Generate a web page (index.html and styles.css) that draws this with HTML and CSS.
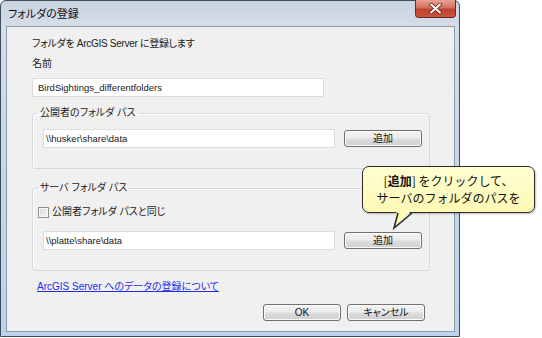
FILE: index.html
```html
<!DOCTYPE html>
<html lang="ja">
<head>
    <meta charset="UTF-8">
    <title>フォルダの登録</title>
    <link rel="stylesheet" href="styles.css">
</head>
<body>
    <div class="window">
        <div class="titlebar">
            <span class="title">フォルダの登録</span>
            <span class="close">
                <svg width="15" height="11" viewBox="0 0 15 11">
                    <path d="M3 1.5 L12 9.5 M12 1.5 L3 9.5" stroke="#5a1c16" stroke-width="3.6" stroke-linecap="round"/>
                    <path d="M3 1.5 L12 9.5 M12 1.5 L3 9.5" stroke="#ffffff" stroke-width="2" stroke-linecap="round"/>
                </svg>
            </span>
        </div>

        <div class="client">
            <p class="intro">フォルダを ArcGIS Server に登録します</p>
            <p class="field-label">名前</p>
            <div class="textbox name">BirdSightings_differentfolders</div>

            <fieldset class="group">
                <legend>公開者のフォルダ パス</legend>
                <div class="path-row">
                    <div class="textbox path">\\husker\share\data</div>
                    <button class="btn">追加</button>
                </div>
            </fieldset>

            <fieldset class="group second">
                <legend>サーバ フォルダ パス</legend>
                <label class="check-row">
                    <span class="checkbox"></span>
                    <span>公開者フォルダ パスと同じ</span>
                </label>
                <div class="path-row">
                    <div class="textbox path">\\platte\share\data</div>
                    <button class="btn">追加</button>
                </div>
            </fieldset>

            <a class="help-link" href="#">ArcGIS Server へのデータの登録について</a>

            <div class="actions">
                <button class="btn">OK</button>
                <button class="btn">キャンセル</button>
            </div>
        </div>
    </div>

    <!-- callout over the dialog -->
    <div class="callout">
        [<b>追加</b>] をクリックして、<br>サーバのフォルダのパスを
    </div>
    <svg class="callout-tail" width="26" height="22" viewBox="0 0 26 22">
        <polygon points="7,0 22,0 4,18" fill="#fdf9b8"/>
        <polyline points="8,3 4,18 22,3" fill="none" stroke="#2b2b2b" stroke-width="1.6" stroke-linejoin="miter"/>
    </svg>
</body>
</html>
```

FILE: styles.css
```css
body {
    margin: 0;
    background: #ffffff;
    font-family: "Liberation Sans", "Noto Sans CJK JP", sans-serif;
    font-size: 10px;
    font-feature-settings: "palt";
    color: #1a1a1a;
    width: 542px;
    height: 338px;
    overflow: hidden;
    position: relative;
}
.window {
    position: relative;
    width: 460px;
    height: 337px;
    box-sizing: border-box;
    border: 1px solid #3d4b5a;
    border-radius: 6px 6px 0 0;
    padding: 0 4px 4px 5px;
    background: linear-gradient(180deg, #c9d3de 0%, #d6dee8 8%, #c7d8ec 40%, #bcd3ee 100%);
    display: flex;
    flex-direction: column;
}
.titlebar {
    height: 25px;
    display: flex;
    align-items: center;
    padding-left: 2px;
    flex-shrink: 0;
}
.title {
    font-size: 11px;
    color: #111;
    margin-top: -1px;
}
.close {
    position: absolute;
    top: -1px;
    right: 3px;
    width: 41px;
    height: 18px;
    box-sizing: border-box;
    border: 1px solid #6b2a25;
    border-top: none;
    border-radius: 0 0 4px 4px;
    background: linear-gradient(180deg, #e8a394 0%, #d2705e 45%, #c0412e 55%, #c9553f 100%);
    display: flex;
    align-items: center;
    justify-content: center;
}
.client {
    flex: 1;
    background: #f0f0f0;
    border: 1px solid #8e9aa6;
    padding: 9px 0 0 25px;
    display: flex;
    flex-direction: column;
    align-items: flex-start;
}
.intro, .field-label {
    margin: 0;
    line-height: 16px;
}
.intro {
    letter-spacing: -0.3px;
}
.field-label {
    margin-top: 4px;
}
.textbox {
    box-sizing: border-box;
    height: 19px;
    background: #ffffff;
    border: 1px solid #dcdcdc;
    line-height: 17px;
    white-space: pre;
    font-size: 9.5px;
}
.name {
    width: 292px;
    margin-top: 6px;
    padding-left: 5px;
}
.group {
    width: 398px;
    box-sizing: border-box;
    margin: 8px 0 0 0;
    padding: 8px 0 20px 10px;
    border: 1px solid #d5d9dd;
    border-radius: 3px;
    box-shadow: inset 1px 1px 0 #ffffff;
    min-width: 0;
}
.group legend {
    padding: 0 2px;
    margin-left: -5px;
    line-height: 16px;
    color: #222;
}
.group.second {
    margin-top: 11px;
    padding-top: 8px;
}
.path-row {
    display: flex;
    align-items: center;
    gap: 9px;
}
.path {
    width: 292px;
    padding-left: 2px;
}
.check-row {
    display: flex;
    align-items: center;
    gap: 3px;
    line-height: 16px;
    margin: 0 0 11px -5px;
}
.checkbox {
    width: 11px;
    height: 11px;
    box-sizing: border-box;
    border: 1px solid #8f8f8f;
    background: linear-gradient(135deg, #dcdcdc 0%, #f4f4f4 100%);
    box-shadow: inset 0 0 0 1px #f8f8f8;
}
.btn {
    width: 78px;
    height: 17px;
    padding: 0;
    border: 1px solid #707070;
    border-radius: 3px;
    background: linear-gradient(180deg, #f3f3f3 0%, #ebebeb 48%, #dddddd 52%, #cfcfcf 100%);
    box-shadow: inset 0 0 0 1px #fbfbfb;
    font-family: "Liberation Sans", "Noto Sans CJK JP", sans-serif;
    font-size: 10px;
    font-feature-settings: "palt";
    line-height: 15px;
    color: #111;
}
.help-link {
    margin: 8px 0 0 5px;
    line-height: 16px;
    color: #1c2ee8;
    text-decoration: underline;
}
.actions {
    display: flex;
    gap: 6px;
    margin: 9px 0 0 231px;
}
.callout {
    position: absolute;
    left: 362px;
    top: 166px;
    width: 173px;
    height: 47px;
    box-sizing: border-box;
    border: 1.6px solid #2b2b2b;
    border-radius: 7px;
    background: linear-gradient(180deg, #ffffd2 0%, #fdf8b4 100%);
    box-shadow: 1px 1px 2px rgba(0, 0, 0, 0.25);
    text-align: center;
    font-family: "Noto Sans CJK JP", sans-serif;
    font-size: 12px;
    font-feature-settings: normal;
    line-height: 17px;
    padding-top: 5px;
    color: #111;
}
.callout b {
    font-weight: bold;
}
.callout-tail {
    position: absolute;
    left: 390px;
    top: 210px;
}
```
